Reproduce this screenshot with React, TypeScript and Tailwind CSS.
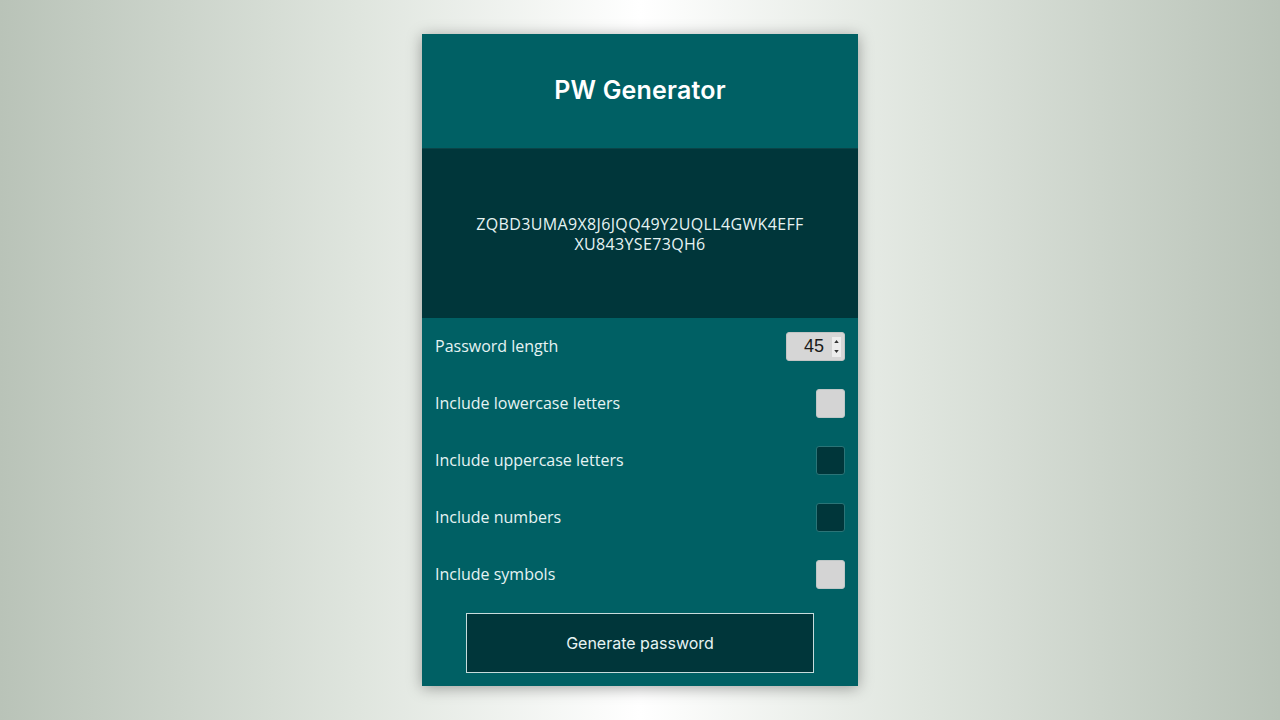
import { useState } from "react";

const options = [
  { label: "Include lowercase letters", checked: false },
  { label: "Include uppercase letters", checked: true },
  { label: "Include numbers", checked: true },
  { label: "Include symbols", checked: false },
];

export default function App() {
  const [length, setLength] = useState(45);
  const [opts, setOpts] = useState(options.map((o) => o.checked));

  return (
    <div className="min-h-screen w-full bg-[linear-gradient(to_right,#b9c3b8_0%,#dfe5de_28%,#ffffff_50%,#dfe5de_72%,#b9c3b8_100%)] flex justify-center pt-[34px] font-['Open_Sans',sans-serif]">
      <div className="w-[436px] h-[652px] bg-[#006064] flex flex-col shadow-[0_2px_14px_rgba(0,0,0,0.35)]">
        {/* header */}
        <div className="h-[114px] flex items-center justify-center">
          <h1 className="text-[25px] font-semibold text-white tracking-[0.2px] font-['Inter',sans-serif]">
            PW Generator
          </h1>
        </div>

        {/* password output */}
        <div className="h-[170px] bg-[#00363a] border-t border-[#0b4347] flex flex-col items-center justify-center px-10 text-[16px] leading-[20px] tracking-[0.35px] text-[#e6f3f3] text-center">
          <span className="block">ZQBD3UMA9X8J6JQQ49Y2UQLL4GWK4EFF</span>
          <span className="block">XU843YSE73QH6</span>
        </div>

        {/* options */}
        <div className="flex flex-col px-[13px]">
          <div className="h-[57px] flex items-center justify-between">
            <span className="text-[16px] text-[#e6f3f3] -mt-[2px]">Password length</span>
            <div className="w-[59px] h-[29px] rounded-[3px] bg-[#d6d6d6] border border-[#c4c4c4] flex items-center pr-[2px]">
              <input
                type="number"
                value={length}
                onChange={(e) => setLength(Number(e.target.value))}
                className="w-[37px] bg-transparent text-right text-[18px] text-[#1a1a1a] font-['Liberation_Sans',sans-serif] outline-none [appearance:textfield] [&::-webkit-inner-spin-button]:appearance-none"
              />
              <div className="ml-[8px] w-[9px] h-[20px] flex flex-col bg-[#ededed] text-[#333]">
                <button
                  onClick={() => setLength(length + 1)}
                  className="flex-1 flex items-center justify-center"
                >
                  <svg width="5" height="3" viewBox="0 0 6 4">
                    <path d="M0 4 L3 0 L6 4 Z" fill="#333" />
                  </svg>
                </button>
                <button
                  onClick={() => setLength(length - 1)}
                  className="flex-1 flex items-center justify-center"
                >
                  <svg width="5" height="3" viewBox="0 0 6 4">
                    <path d="M0 0 L3 4 L6 0 Z" fill="#333" />
                  </svg>
                </button>
              </div>
            </div>
          </div>
          {options.map((o, i) => (
            <div key={o.label} className="h-[57px] flex items-center justify-between">
              <span className="text-[16px] text-[#e6f3f3] -mt-[2px]">{o.label}</span>
              <button
                onClick={() => setOpts(opts.map((v, j) => (j === i ? !v : v)))}
                className={`w-[29px] h-[29px] rounded-[3px] border ${
                  opts[i]
                    ? "bg-[#00363a] border-[#2b7477]"
                    : "bg-[#d4d4d4] border-[#bfc7c7]"
                }`}
              />
            </div>
          ))}
        </div>

        <div className="flex justify-center mt-[10px]">
          <button className="w-[348px] h-[60px] bg-[#00363a] border border-[#c7dcdc] text-[16px] text-[#e6f3f3] font-['Inter',sans-serif]">
            Generate password
          </button>
        </div>
      </div>
    </div>
  );
}
